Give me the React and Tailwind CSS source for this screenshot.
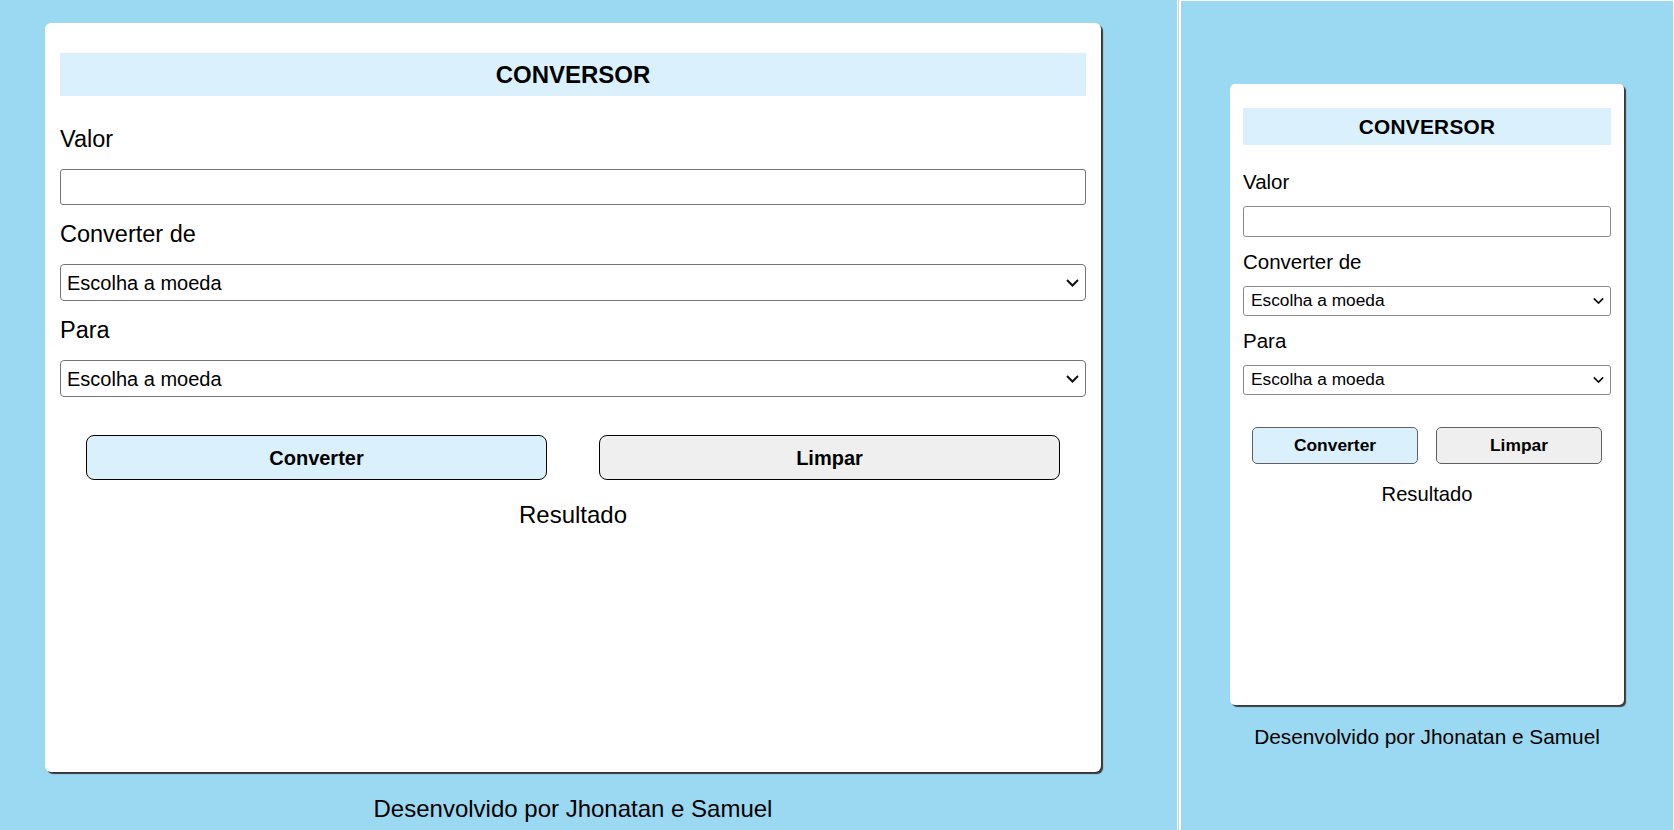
import React, { useState } from "react";

// duas versões da mesma tela: desktop (esquerda) e mobile (direita)
const estilos = {
  desktop: {
    card: "w-[1056px] h-[749px] rounded-[6px] pt-[30px] px-[15px] shadow-[2px_2px_1px_#363636]",
    titulo: "h-[43px] leading-[43px] text-[24px]",
    label: "text-[23.5px] leading-[27px] my-[16px]",
    primeiroLabel: "text-[23.5px] leading-[27px] mt-[30px] mb-[16px]",
    input: "h-[36px] rounded-[3px] px-[6px] text-[20px] border-[#767676]",
    select: "h-[37px] rounded-[4px] pl-[6px] text-[20px] border-[#767676]",
    seta: "right-[7px] w-[13px] h-[8px]",
    botoes: "mt-[38px]",
    botao: "h-[45px] rounded-[8px] text-[20px] border-black",
    resultado: "mt-[21px] text-[24px] leading-[28px]",
    rodape: "mt-[23px] text-[24px] leading-[28px]",
  },
  mobile: {
    card: "w-[394px] h-[621px] rounded-[5px] pt-[24px] px-[13px] shadow-[2px_2px_1px_#3a3a3a]",
    titulo: "h-[37px] leading-[37px] text-[20.8px] tracking-[0.3px]",
    label: "text-[20.5px] leading-[23px] my-[13px]",
    primeiroLabel: "text-[20.5px] leading-[23px] mt-[25px] mb-[13px]",
    input: "h-[31px] rounded-[3px] px-[6px] text-[17px] border-[#8a8a8a]",
    select: "h-[30px] rounded-[3px] pl-[7px] text-[17.3px] border-[#8a8a8a]",
    seta: "right-[7px] w-[11px] h-[7px]",
    botoes: "mt-[32px]",
    botao: "h-[37px] rounded-[5px] text-[17.4px] border-[#606060]",
    resultado: "mt-[19px] text-[20.2px] leading-[23px]",
    rodape: "mt-[20px] text-[20.8px] leading-[24px]",
  },
};

const moedas = ["Real", "Dólar", "Euro", "Libra"];

const SelectMoeda = ({ s, value, onChange }) => (
  <div className="relative">
    <select
      value={value}
      onChange={(e) => onChange(e.target.value)}
      className={`w-full appearance-none border bg-white text-black outline-none ${s.select}`}
    >
      <option value="">Escolha a moeda</option>
      {moedas.map((m) => (
        <option key={m} value={m}>
          {m}
        </option>
      ))}
    </select>
    <svg
      viewBox="0 0 13 8"
      className={`pointer-events-none absolute top-1/2 -translate-y-1/2 ${s.seta}`}
      fill="none"
      stroke="#111"
      strokeWidth="2"
    >
      <polyline points="1,1 6.5,6.5 12,1" />
    </svg>
  </div>
);

const Conversor = ({ variante }) => {
  const s = estilos[variante];
  const [valor, setValor] = useState("");
  const [de, setDe] = useState("");
  const [para, setPara] = useState("");

  const limpar = () => {
    setValor("");
    setDe("");
    setPara("");
  };

  return (
    <div className="flex w-fit flex-col">
      <div className={`bg-white ${s.card}`}>
        <h1 className={`bg-[#daf1fd] text-center font-bold ${s.titulo}`}>CONVERSOR</h1>

        <label className={`block ${s.primeiroLabel}`}>Valor</label>
        <input
          type="number"
          value={valor}
          onChange={(e) => setValor(e.target.value)}
          className={`block w-full border bg-white outline-none ${s.input}`}
        />

        <label className={`block ${s.label}`}>Converter de</label>
        <SelectMoeda s={s} value={de} onChange={setDe} />

        <label className={`block ${s.label}`}>Para</label>
        <SelectMoeda s={s} value={para} onChange={setPara} />

        <div className={`flex justify-around ${s.botoes}`}>
          <button type="button" className={`w-[45%] border bg-[#daf1fd] font-bold ${s.botao}`}>
            Converter
          </button>
          <button
            type="button"
            onClick={limpar}
            className={`w-[45%] border bg-[#efefef] font-bold ${s.botao}`}
          >
            Limpar
          </button>
        </div>

        <p className={`text-center ${s.resultado}`}>Resultado</p>
      </div>

      <p className={`text-center ${s.rodape}`}>Desenvolvido por Jhonatan e Samuel</p>
    </div>
  );
};

export default function App() {
  return (
    <div className="flex h-[830px] w-[1674px] overflow-hidden bg-[#9bd9f2] font-['Liberation_Sans',Arial,Helvetica,sans-serif] text-black">
      {/* desktop */}
      <div className="w-[1177px] shrink-0 pl-[45px] pt-[23px]">
        <Conversor variante="desktop" />
      </div>

      {/* divisória */}
      <div className="w-px shrink-0 bg-white" />
      <div className="w-px shrink-0 bg-[#d4d4d4]" />
      <div className="w-[2px] shrink-0 bg-white" />

      {/* mobile */}
      <div className="flex flex-1 justify-center border-r border-t border-white pt-[83px]">
        <Conversor variante="mobile" />
      </div>
    </div>
  );
}
